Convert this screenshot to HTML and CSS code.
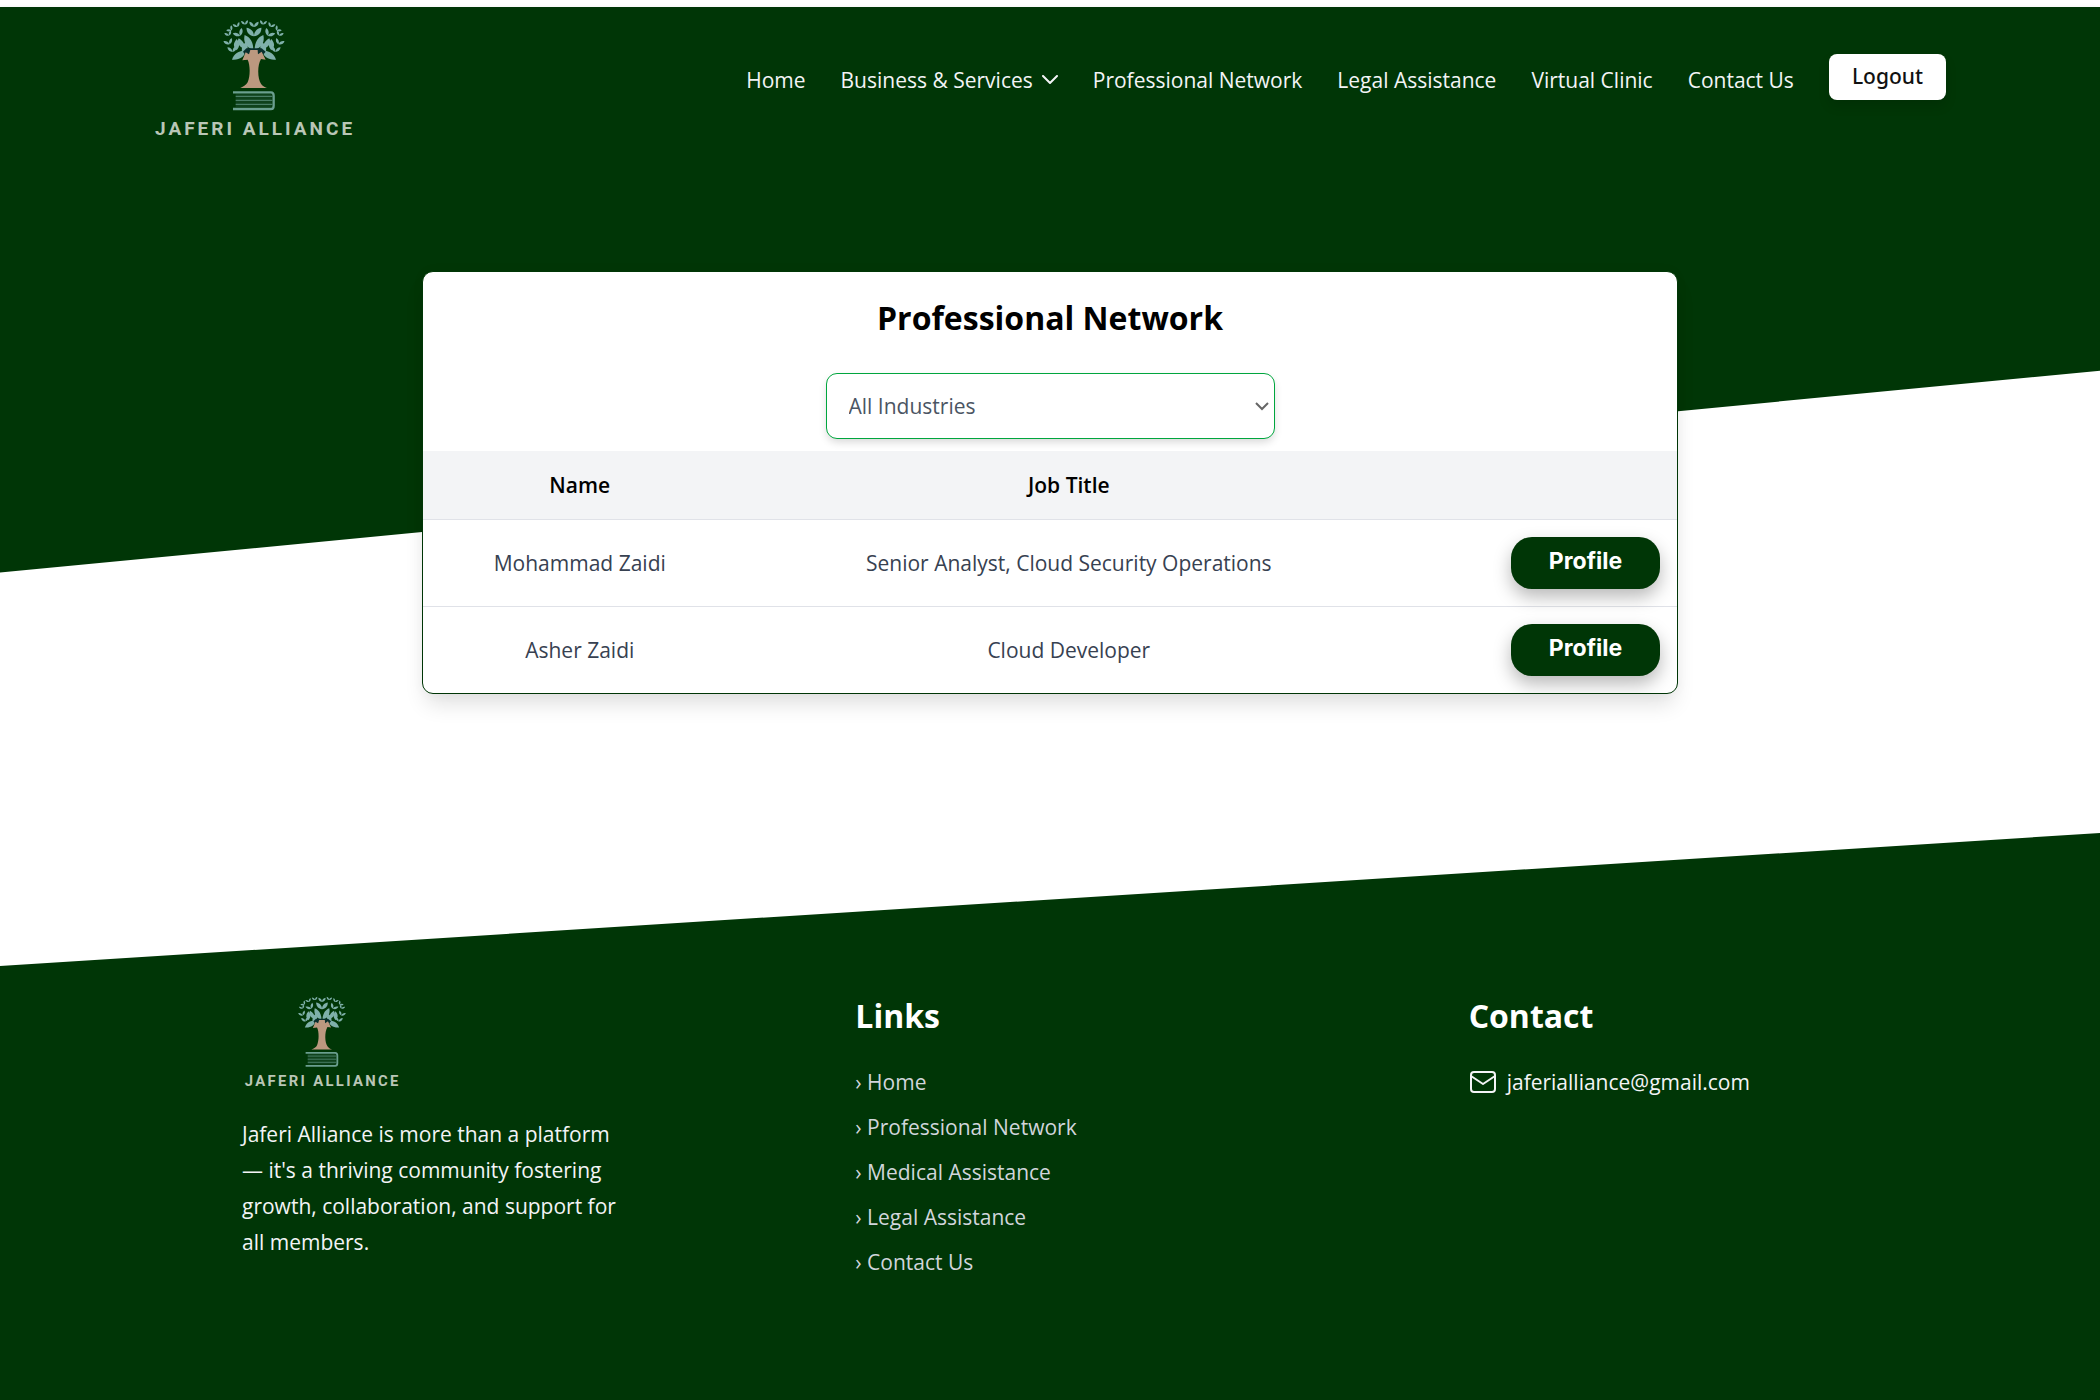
FILE: index.html
```html
<!DOCTYPE html>
<html lang="en">
<head>
<meta charset="utf-8">
<meta name="viewport" content="width=device-width, initial-scale=1">
<title>Professional Network | Jaferi Alliance</title>
<link rel="stylesheet" href="styles.css">
</head>
<body>
<svg class="sprite" width="0" height="0" aria-hidden="true">
  <defs>
    <g id="pair">
      <path d="M0 1C-8 0-14-5-14-15C-6-14 0-8 0 1Z"/>
      <path d="M0 1C8 0 14-5 14-15C6-14 0-8 0 1Z"/>
    </g>
    <g id="half">
      <use href="#pair" transform="translate(-27 76) rotate(-8) scale(.75)"/>
      <use href="#pair" transform="translate(-50 83) rotate(-22) scale(.75)"/>
      <use href="#pair" transform="translate(-68 94) rotate(-45) scale(.75)"/>
      <use href="#pair" transform="translate(-75 109) rotate(-22) scale(.75)"/>
      <use href="#pair" transform="translate(-42 109) rotate(-30) scale(1.1)"/>
      <use href="#pair" transform="translate(-74 135) rotate(-22) scale(.95)"/>
      <use href="#pair" transform="translate(-64 158) rotate(-8) scale(1)"/>
      <path d="M-52 154C-64 142-62 132-52 120C-42 132-42 142-52 154Z"/>
      <path d="M-28 150C-46 144-52 130-46 118C-32 126-26 138-28 150Z"/>
      <path d="M-2 152C-24 146-33 128-28 108C-12 114-2 130-2 152Z"/>
      <path d="M-66 182C-60 164-48 156-24 154C-28 174-44 184-66 182Z"/>
      <path d="M-36 158C-38 144-34 136-24 130C-16 142-18 152-26 158Z"/>
    </g>
    <symbol id="logo" viewBox="0 0 200 120">
      <g transform="translate(-15 -18) scale(.3333)">
        <g transform="translate(345 0)" fill="#7fb0aa">
          <use href="#half"/>
          <use href="#half" transform="scale(-1 1)"/>
          <use href="#pair" transform="translate(0 83)"/>
          <use href="#pair" transform="translate(0 110) scale(1.6)"/>
        </g>
        <path fill="#082f2c" d="M312 158L322 148H368L380 158L368 172H322Z"/>
        <path fill="#bb987f" d="M334 153H356L357 166L368 158L380 182L366 180C354 200 356 240 366 254C370 260 376 264 384 267H304C314 262 322 258 326 250C334 232 334 198 326 182L310 184L320 160L330 166Z"/>
        <path fill="#336150" d="M290 284H398V324H290Z" opacity=".3"/>
        <g fill="none" stroke="#6b9f90">
          <path stroke-width="7" d="M282 280H396Q404 280 404 290V320Q404 330 396 330H282"/>
          <path stroke-width="3" opacity=".8" d="M290 292H400M290 304H400M290 316H400"/>
        </g>
      </g>
      <text x="1" y="118" class="logo-word">JAFERI ALLIANCE</text>
    </symbol>
  </defs>
</svg>

<header class="site-header">
  <a class="brand" href="#" aria-label="Jaferi Alliance"><svg class="logo"><use href="#logo"/></svg></a>
  <nav class="nav" aria-label="Main">
    <a href="#">Home</a>
    <a href="#" class="has-menu">Business &amp; Services
      <svg width="16" height="10" viewBox="0 0 16 10" fill="none" stroke="currentColor" stroke-width="2" stroke-linecap="round" stroke-linejoin="round" aria-hidden="true"><path d="M1 1L8 8L15 1"/></svg>
    </a>
    <a href="#">Professional Network</a>
    <a href="#">Legal Assistance</a>
    <a href="#">Virtual Clinic</a>
    <a href="#">Contact Us</a>
    <button type="button" class="logout">Logout</button>
  </nav>
</header>

<main class="hero">
  <section class="card">
    <h1>Professional Network</h1>
    <div class="filter">
      <select aria-label="Industry"><option>All Industries</option></select>
      <svg width="14" height="9" viewBox="0 0 14 9" fill="none" stroke="#666" stroke-width="2" aria-hidden="true"><path d="M1 1L7 7L13 1"/></svg>
    </div>
    <table>
      <thead><tr><th class="col-name">Name</th><th class="col-job">Job Title</th><th></th></tr></thead>
      <tbody>
        <tr><td>Mohammad Zaidi</td><td>Senior Analyst, Cloud Security Operations</td><td class="action"><button type="button" class="profile">Profile</button></td></tr>
        <tr><td>Asher Zaidi</td><td>Cloud Developer</td><td class="action"><button type="button" class="profile">Profile</button></td></tr>
      </tbody>
    </table>
  </section>
</main>

<footer class="site-footer">
  <div class="about">
    <svg class="logo logo-small" role="img" aria-label="Jaferi Alliance"><use href="#logo"/></svg>
    <p>Jaferi Alliance is more than a platform — it's a thriving community fostering growth, collaboration, and support for all members.</p>
  </div>
  <div>
    <h2>Links</h2>
    <ul class="links">
      <li><a href="#">› Home</a></li>
      <li><a href="#">› Professional Network</a></li>
      <li><a href="#">› Medical Assistance</a></li>
      <li><a href="#">› Legal Assistance</a></li>
      <li><a href="#">› Contact Us</a></li>
    </ul>
  </div>
  <div>
    <h2>Contact</h2>
    <a class="mail" href="mailto:jaferialliance@gmail.com">
      <svg width="28" height="24" viewBox="0 0 28 24" fill="none" stroke="currentColor" stroke-width="2" stroke-linejoin="round" aria-hidden="true"><rect x="2" y="2" width="24" height="20" rx="3"/><path d="M2 6L14 14L26 6"/></svg>
      <span>jaferialliance@gmail.com</span>
    </a>
  </div>
</footer>
</body>
</html>
```
FILE: styles.css
```css
:root {
  --green: #003606;
  --line: #e0e2e8;
}

* { box-sizing: border-box; }

body {
  margin: 0;
  padding-top: 7px;
  min-height: 100vh;
  display: flex;
  flex-direction: column;
  background: #fff;
  font: 21px/36px "Open Sans", "Noto Sans", sans-serif;
}

a { color: inherit; text-decoration: none; }
button, select { font: inherit; cursor: pointer; }
h1, h2, p, ul { margin: 0; padding: 0; }
.sprite { display: none; }

.site-header {
  display: flex;
  justify-content: space-between;
  align-items: flex-start;
  min-height: 153px;
  padding: 10px 154px 0;
  background: var(--green);
  color: #f3f4f6;
  position: relative;
  box-shadow: 0 2px 6px rgba(0, 0, 0, .1);
}

.brand { display: flex; }
.logo { width: 200px; height: 120px; }
.logo-word {
  font: 700 19px Roboto, sans-serif;
  letter-spacing: 3px;
  fill: #b9c6b6;
}

.nav {
  display: flex;
  align-items: flex-start;
  gap: 35px;
  padding-top: 37px;
  font-weight: 500;
  white-space: nowrap;
}
.nav a { padding-top: 8px; }
.has-menu { display: flex; align-items: center; gap: 9px; }
.logout {
  height: 46px;
  padding: 0 23px 2px;
  border: 0;
  border-radius: 8px;
  background: #fff;
  color: #111;
  font-family: "Noto Sans", sans-serif;
  font-weight: 500;
  box-shadow: 0 6px 12px rgba(0, 0, 0, .12);
}

.hero { display: grid; }
.hero::before {
  content: "";
  grid-area: 1 / 1;
  background: var(--green);
  clip-path: polygon(0 0, 100% 0, 100% 31.3%, 0 61.3%);
}

.card {
  grid-area: 1 / 1;
  justify-self: center;
  z-index: 1;
  width: 60%;
  max-width: 1256px;
  min-width: 0;
  margin: 111px 0 139px;
  border: 1px solid var(--green);
  border-radius: 11px;
  background: #fff;
  box-shadow: 0 14px 21px -4px rgba(0, 0, 0, .12), 0 0 14px rgba(0, 0, 0, .03);
  overflow: hidden;
}
.card h1 {
  padding: 24px 0 33px;
  font-size: 32px;
  line-height: 44px;
  text-align: center;
}

.filter {
  display: grid;
  align-items: center;
  width: 449px;
  max-width: 100%;
  margin: 0 auto 12px;
}
.filter select {
  grid-area: 1 / 1;
  appearance: none;
  height: 66px;
  padding: 0 22px;
  border: 1px solid #00a63e;
  border-radius: 11px;
  background: #fff;
  color: #4b5563;
  box-shadow: 0 4px 8px -1px rgba(0, 0, 0, .16);
}
.filter svg {
  grid-area: 1 / 1;
  justify-self: end;
  margin-right: 6px;
  z-index: 1;
  pointer-events: none;
}

table { width: 100%; border-collapse: collapse; table-layout: fixed; text-align: center; }
.col-name { width: 25%; }
.col-job { width: 53%; }
thead { background: #f3f4f6; }
th { height: 68px; padding: 0; font-weight: 600; }
td { height: 87px; padding: 0; color: #374151; border-top: 1px solid var(--line); }
td.action { padding-right: 17px; text-align: right; }
.profile {
  width: 149px;
  height: 52px;
  padding: 0 0 4px;
  border: 0;
  border-radius: 21px;
  background: var(--green);
  color: #fff;
  font: 700 23px/36px Inter, sans-serif;
  vertical-align: middle;
  box-shadow: 0 8px 18px rgba(0, 0, 0, .28);
}

.site-footer {
  flex: 1;
  display: grid;
  grid-template-columns: repeat(3, 1fr);
  gap: 224px;
  padding: 161px 242px 96px;
  background: var(--green);
  color: #f3f4f6;
  clip-path: polygon(0 133px, 100% 0, 100% 100%, 0 100%);
}
.logo-small { display: block; width: 156px; height: 94px; margin: 0 0 28px 2px; }
.site-footer h2 {
  margin-bottom: 26px;
  color: #fff;
  font-size: 32px;
  line-height: 44px;
}
.links { list-style: none; color: #d1d5db; }
.links li { margin-bottom: 9px; }
.mail { display: flex; align-items: center; gap: 10px; }
```
